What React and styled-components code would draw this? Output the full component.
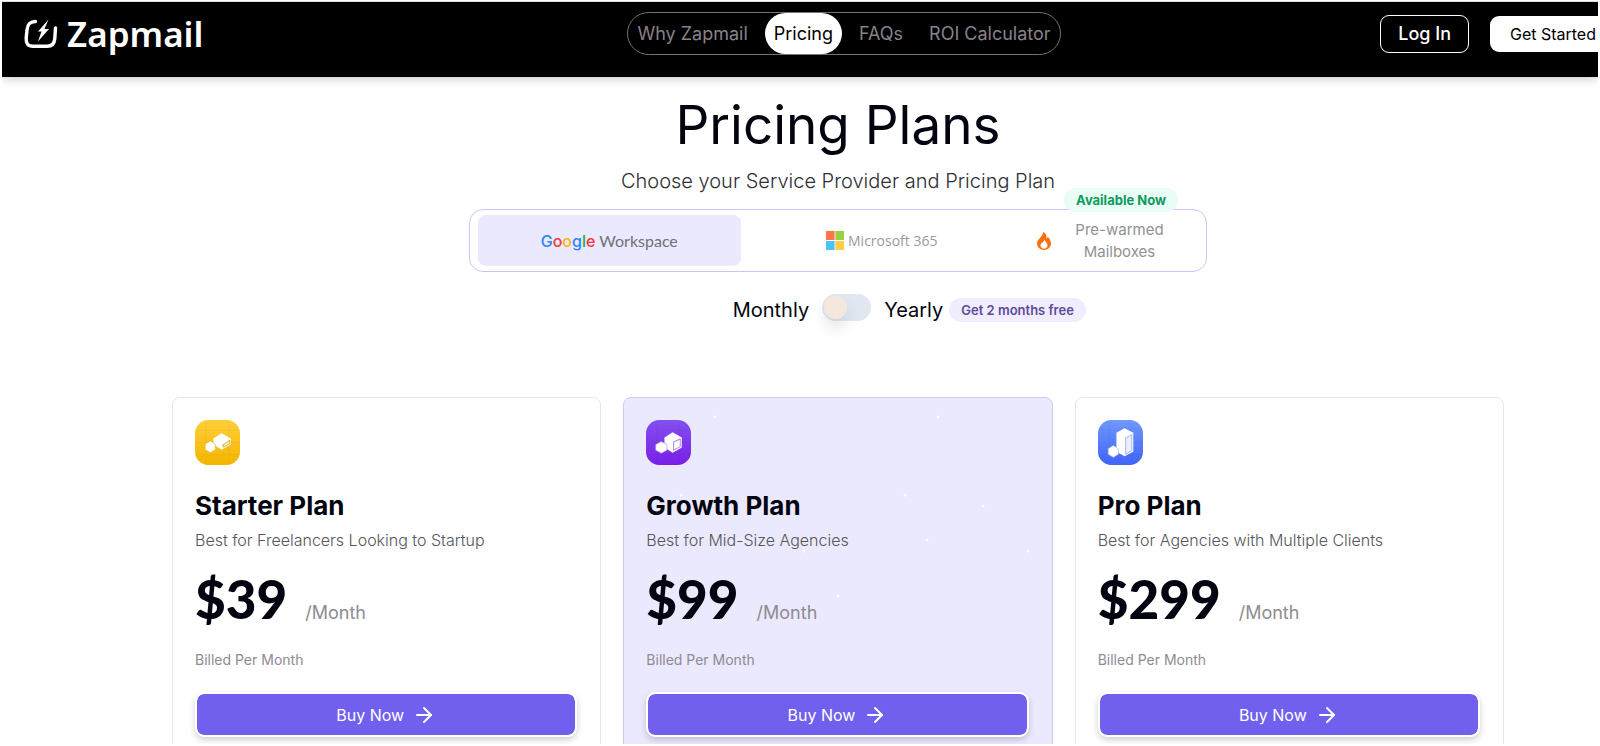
import { useState } from "react";
import styled, { createGlobalStyle } from "styled-components";
import { FiArrowRight } from "react-icons/fi";

const links = ["Why Zapmail", "Pricing", "FAQs", "ROI Calculator"];

const plans = [
  { id: "starter", name: "Starter Plan", info: "Best for Freelancers Looking to Startup", price: 39 },
  { id: "growth", name: "Growth Plan", info: "Best for Mid-Size Agencies", price: 99, popular: true },
  { id: "pro", name: "Pro Plan", info: "Best for Agencies with Multiple Clients", price: 299 },
];

const sparkles = [
  [91, 19], [314, 19], [57, 97], [281, 97], [359, 108],
  [303, 142], [180, 153], [404, 153], [214, 198],
];

const LogoMark = () => (
  <svg width="34" height="30" viewBox="0 0 34 30" fill="none" aria-hidden="true">
    <path
      d="M11.5 2.5C5 2.5 3.5 6 3 11L2.2 19C1.8 24.5 4 27.3 9 27.3H23C28 27.3 30.4 24.8 30.8 19.5L31.5 9"
      stroke="#fff"
      strokeWidth="3.4"
      strokeLinecap="round"
    />
    <path d="M24.500 0.500L14 12.500H17.500L14 22.500L25 10H20.500Z" fill="#fff" />
  </svg>
);

const MicrosoftMark = () => (
  <svg width="18" height="19" viewBox="0 0 18 19" aria-hidden="true">
    <rect width="8.6" height="9" fill="#ff7549" />
    <rect x="9.4" width="8.6" height="9" fill="#99d044" />
    <rect y="10" width="8.6" height="9" fill="#4cc2fb" />
    <rect x="9.4" y="10" width="8.6" height="9" fill="#ffcd48" />
  </svg>
);

const Flame = () => (
  <svg width="14" height="18" viewBox="0 0 14 18" aria-hidden="true">
    <path
      d="M6 0C9.500 1.500 9.800 4.300 9.300 6.800C10.100 6.300 10.500 5.500 10.600 4.700C12.800 6.800 14 9 14 11.300C14 15.200 11 18 7 18C3 18 0 15.200 0 11.300C0 7 5.800 5.500 6 0Z"
      fill="#ff6d12"
    />
    <path d="M7.200 7.800C8.200 9.600 10.500 11 10.500 13.400C10.500 15.400 9 16.600 7 16.600C5 16.600 3.500 15.400 3.500 13.400C3.500 11.400 6.700 10.300 7.200 7.800Z" fill="#fff" />
  </svg>
);

const iconColors = {
  starter: ["#ffcf3a", "#f5b500", "#e5b12c"],
  growth: ["#8250f0", "#7a1fe8", "#a98bea"],
  pro: ["#6f99fb", "#4262fa", "#a9bde8"],
};

const PlanIcon = ({ id }) => {
  const [from, to, line] = iconColors[id];

  return (
    <svg width="45" height="45" viewBox="0 0 44 44" aria-hidden="true">
      <defs>
        <linearGradient id={"bg-" + id} x1="0" y1="0" x2="0" y2="1">
          <stop stopColor={from} />
          <stop offset="1" stopColor={to} />
        </linearGradient>
      </defs>
      <rect width="44" height="44" rx="13" fill={`url(#bg-${id})`} />
      <path d="M11 0V44M33 0V44M0 10H44M0 22H44M0 34H44" stroke="#000" strokeOpacity="0.04" />
      {id === "starter" && (
        <g fill="#fff" strokeLinejoin="round">
          <path d="M18 18L26 13L35 18V24L26 29L18 24Z" />
          <path d="M15 20.500L20 23.500V29L15 32L10 29V23.500Z" stroke={line} strokeWidth="0.6" />
          <path d="M27 24.500L34 20V23L28 26.500Z" fill="none" stroke={line} />
        </g>
      )}
      {id === "growth" && (
        <g fill="#fff" strokeLinejoin="round">
          <path d="M26 12L35 17V27L26 32L18 27V17Z" />
          <path d="M15 21L20.500 24V29.500L15 32.500L9.500 29.500V24Z" stroke={line} strokeWidth="0.6" />
          <path d="M27 21.500L33.500 18.500V26L27 29.500Z" fill="none" stroke={line} />
        </g>
      )}
      {id === "pro" && (
        <g fill="#fff" strokeLinejoin="round">
          <path d="M26 8L34.500 12.500V31L26 35.500L18 31V12.500Z" />
          <path d="M15 25L20 28V33.500L15 36.500L10 33.500V28Z" stroke={line} strokeWidth="0.6" />
          <path d="M27 17.500L33 14.500V30L27 33.500Z" fill="#e8eefb" stroke={line} />
        </g>
      )}
    </svg>
  );
};

const App = () => {
  const [provider, setProvider] = useState("google");
  const [yearly, setYearly] = useState(false);

  return (
    <Page>
      <GlobalStyle />

      <Header>
        <HeaderInner>
          <Logo href="#">
            <LogoMark />
            Zapmail
          </Logo>
          <Nav>
            {links.map((link) => (
              <NavLink key={link} href="#" $active={link === "Pricing"}>
                {link}
              </NavLink>
            ))}
          </Nav>
          <Actions>
            <LoginButton>Log In</LoginButton>
            <StartButton>Get Started</StartButton>
          </Actions>
        </HeaderInner>
      </Header>

      <Main>
        <Title>Pricing Plans</Title>
        <Subtitle>Choose your Service Provider and Pricing Plan</Subtitle>

        <Providers>
          <GoogleTab $active={provider === "google"} onClick={() => setProvider("google")}>
            <GoogleWord>
              <span>G</span><span>o</span><span>o</span><span>g</span><span>l</span><span>e</span>
            </GoogleWord>
            Workspace
          </GoogleTab>
          <MicrosoftTab $active={provider === "microsoft"} onClick={() => setProvider("microsoft")}>
            <MicrosoftMark />
            Microsoft 365
          </MicrosoftTab>
          <WarmTab $active={provider === "warm"} onClick={() => setProvider("warm")}>
            <Flame />
            <span>
              Pre-warmed
              <br />
              Mailboxes
            </span>
            <AvailableBadge>Available Now</AvailableBadge>
          </WarmTab>
        </Providers>

        <Billing>
          <label htmlFor="billing">Monthly</label>
          <Switch
            id="billing"
            type="checkbox"
            role="switch"
            checked={yearly}
            onChange={(e) => setYearly(e.target.checked)}
          />
          <YearlyLabel htmlFor="billing">
            Yearly
            <FreeBadge>Get 2 months free</FreeBadge>
          </YearlyLabel>
        </Billing>

        <Plans>
          {plans.map((plan) => (
            <Card key={plan.id} $popular={plan.popular}>
              {plan.popular && (
                <Sparkles aria-hidden="true">
                  {sparkles.map(([x, y]) => (
                    <circle key={x + "-" + y} cx={x} cy={y} r="1.5" />
                  ))}
                </Sparkles>
              )}
              <PlanIcon id={plan.id} />
              <PlanName>{plan.name}</PlanName>
              <PlanInfo>{plan.info}</PlanInfo>
              <PriceRow>
                <Price>${plan.price}</Price>
                <Period>/Month</Period>
              </PriceRow>
              <Billed>Billed Per Month</Billed>
              <BuyButton>
                Buy Now
                <FiArrowRight size={24} />
              </BuyButton>
            </Card>
          ))}
        </Plans>
      </Main>
    </Page>
  );
};

const GlobalStyle = createGlobalStyle`
  * {
    box-sizing: border-box;
    margin: 0;
    padding: 0;
  }

  body {
    background: #fff;
    color: #020410;
    font-family: Inter, "Liberation Sans", sans-serif;
  }

  button {
    font-family: inherit;
    border: none;
    background: none;
    cursor: pointer;
  }

  a {
    text-decoration: none;
  }
`;

const Page = styled.div`
  height: 100vh;
  overflow: hidden;
  border: 2px solid #fff;
  border-top-width: 1px;
`;

const Header = styled.header`
  background: #000;
  border-top: 1px solid #d9dfe0;
  box-shadow: 0 1px 10px rgba(0, 0, 0, 0.25);
`;

/* the bar is wider than the viewport, the last button runs off the edge */
const HeaderInner = styled.div`
  display: grid;
  grid-template-columns: 1fr auto 1fr;
  align-items: center;
  margin-right: -88px;
  padding: 10px 22px 22px;
`;

const Logo = styled.a`
  display: flex;
  align-items: center;
  gap: 9px;
  color: #fff;
  font-family: "Noto Sans", sans-serif;
  font-size: 35px;
  font-weight: 600;
  line-height: 40px;
`;

const Nav = styled.nav`
  display: flex;
  gap: 8px;
  border: 1px solid #77727a;
  border-radius: 22px;
`;

const NavLink = styled.a`
  padding: 0 9px;
  border-radius: 21px;
  font-size: 18px;
  line-height: 41px;
  color: ${({ $active }) => ($active ? "#000" : "#88828b")};
  background: ${({ $active }) => ($active ? "#fff" : "transparent")};
`;

const Actions = styled.div`
  display: flex;
  align-items: center;
  justify-content: flex-end;
  gap: 21px;
  padding-right: 48px;
`;

const LoginButton = styled.button`
  height: 38px;
  padding: 0 17px;
  border: 1px solid #fff;
  border-radius: 9px;
  color: #fff;
  font-size: 18px;
  font-weight: 500;
`;

const StartButton = styled.button`
  height: 36px;
  padding: 0 20px;
  border-radius: 9px;
  background: #fff;
  color: #000;
  font-size: 16px;
  white-space: nowrap;
`;

const Main = styled.main`
  display: flex;
  flex-direction: column;
  align-items: center;
  padding: 18px 0 40px 76px;
`;

const Title = styled.h1`
  font-size: 53px;
  font-weight: 400;
  line-height: 60px;
`;

const Subtitle = styled.p`
  margin-top: 12px;
  font-size: 20px;
  font-weight: 300;
  line-height: 28px;
  color: #2e2e33;
`;

const Providers = styled.div`
  display: grid;
  grid-template-columns: 3fr 3fr 2fr;
  gap: 10px;
  width: 100%;
  max-width: 738px;
  margin-top: 14px;
  padding: 5px 8px;
  border: 1px solid #cac5f6;
  border-radius: 14px;
`;

const Tab = styled.button`
  position: relative;
  display: flex;
  align-items: center;
  justify-content: center;
  height: 51px;
  border-radius: 8px;
  font-size: 16px;
  background: ${({ $active }) => ($active ? "#ebe9fd" : "transparent")};
`;

const GoogleTab = styled(Tab)`
  gap: 4px;
  font-family: Lato, sans-serif;
  color: #6f7078;
`;

const GoogleWord = styled.span`
  font-family: Inter, sans-serif;
  font-weight: 500;
  color: #2c84fa;

  span:nth-child(2), span:nth-child(6) {
    color: #f5383a;
  }
  span:nth-child(3) {
    color: #fbb60c;
  }
  span:nth-child(5) {
    color: #22ab4b;
  }
`;

const MicrosoftTab = styled(Tab)`
  gap: 4px;
  font-family: "Open Sans", sans-serif;
  font-size: 14px;
  font-weight: 500;
  color: #9a9a9a;
`;

const WarmTab = styled(Tab)`
  gap: 24px;
  padding-right: 20px;
  font-size: 15px;
  line-height: 22px;
  color: #929095;
`;

const AvailableBadge = styled.em`
  position: absolute;
  top: -27px;
  right: 20px;
  padding: 0 12px;
  border-radius: 12px;
  background: #e9fdf4;
  color: #0d9a5f;
  font-size: 13px;
  font-style: normal;
  font-weight: 700;
  line-height: 24px;
  white-space: nowrap;
`;

const Billing = styled.div`
  display: flex;
  align-items: center;
  gap: 13px;
  margin-top: 22px;
  font-size: 20px;
  line-height: 28px;
`;

const Switch = styled.input`
  appearance: none;
  width: 49px;
  height: 27px;
  margin-bottom: 4px;
  padding: 2px;
  border-radius: 14px;
  background: #e1e7f0;
  cursor: pointer;

  &::before {
    content: "";
    display: block;
    width: 23px;
    height: 23px;
    margin-left: ${({ checked }) => (checked ? "22px" : "0")};
    border-radius: 50%;
    background: #f4e8de;
    box-shadow: 0 10px 15px rgba(0, 0, 0, 0.1);
  }
`;

const YearlyLabel = styled.label`
  position: relative;
`;

const FreeBadge = styled.span`
  position: absolute;
  top: 2px;
  left: 100%;
  margin-left: 6px;
  padding: 0 12px;
  border-radius: 12px;
  background: #f0edff;
  color: #5d4b99;
  font-size: 13px;
  font-weight: 600;
  line-height: 24px;
  white-space: nowrap;
`;

const Plans = styled.div`
  display: grid;
  grid-template-columns: repeat(3, 1fr);
  gap: 22px;
  width: 100%;
  max-width: 1332px;
  margin-top: 72px;
`;

const Card = styled.section`
  position: relative;
  display: flex;
  flex-direction: column;
  align-items: flex-start;
  padding: 22px 23px 40px 22px;
  border: 1px solid ${({ $popular }) => ($popular ? "#cdc8f6" : "#e7e7ea")};
  border-radius: 8px;
  background: ${({ $popular }) => ($popular ? "#ebe9fd" : "#fff")};
`;

const Sparkles = styled.svg`
  position: absolute;
  inset: 0;
  width: 100%;
  height: 100%;
  fill: #fff;
  pointer-events: none;
`;

const PlanName = styled.h2`
  margin-top: 25px;
  font-size: 26px;
  font-weight: 700;
  line-height: 32px;
`;

const PlanInfo = styled.p`
  margin-top: 6px;
  font-size: 16px;
  font-weight: 300;
  line-height: 24px;
  color: #55555a;
`;

const PriceRow = styled.div`
  display: flex;
  align-items: baseline;
  gap: 18px;
  margin-top: 17px;
`;

const Price = styled.strong`
  font-family: Lato, sans-serif;
  font-size: 53px;
  font-weight: 900;
  line-height: 60px;
`;

const Period = styled.span`
  font-size: 18px;
  color: #8e8b92;
`;

const Billed = styled.p`
  margin-top: 21px;
  font-size: 14px;
  line-height: 20px;
  color: #8e8b92;
`;

const BuyButton = styled.button`
  display: flex;
  align-items: center;
  justify-content: center;
  gap: 8px;
  width: 100%;
  height: 45px;
  margin-top: 22px;
  border: 2px solid #fff;
  border-radius: 9px;
  background: #7160ed;
  background-clip: padding-box;
  box-shadow: 0 3px 6px rgba(0, 0, 0, 0.18);
  color: #fff;
  font-size: 16px;
`;

export default App;
